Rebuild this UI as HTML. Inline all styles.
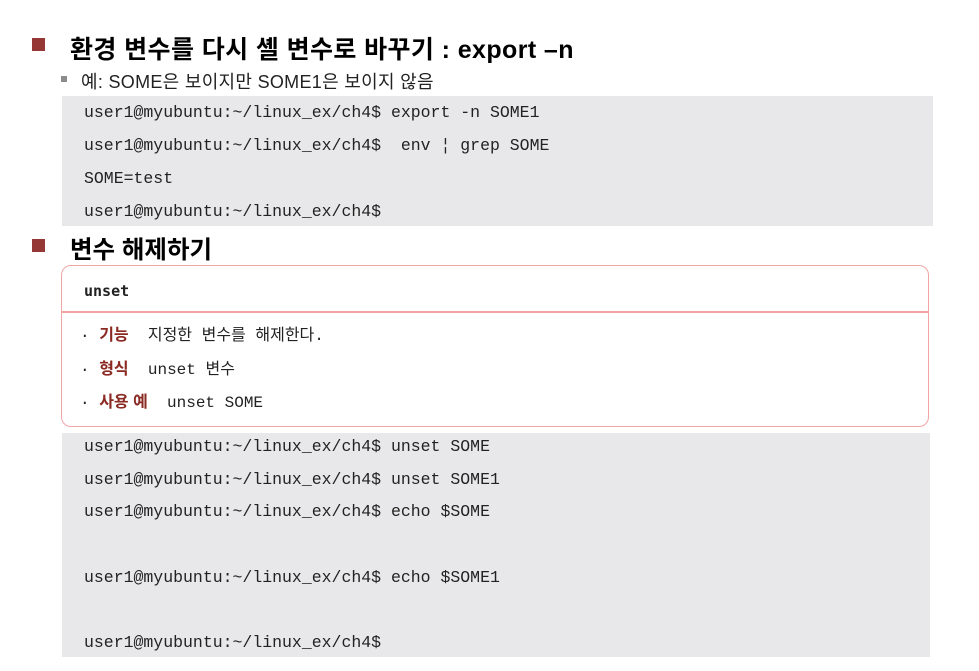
<!DOCTYPE html>
<html><head><meta charset="utf-8"><style>
body{margin:0;width:979px;height:671px;background:#fff;position:relative;overflow:hidden;font-family:"Liberation Sans","Noto Sans CJK KR",sans-serif;}
.a{position:absolute;}
.sq{position:absolute;width:13px;height:13px;background:#953735;}
.h{position:absolute;font-weight:bold;font-size:25px;color:#000;left:70px;white-space:nowrap;}
.code{position:absolute;background:#e8e8ea;}
.m{position:absolute;left:22px;font-family:"Liberation Mono","Noto Sans CJK KR",monospace;font-size:16.5px;color:#222;white-space:pre;line-height:20px;}
.box{position:absolute;left:61px;top:265px;width:866px;height:160px;border:1.5px solid #f2a6a4;border-radius:10px;}
.bl{position:absolute;left:18px;font-family:"Liberation Mono","Noto Sans CJK KR",monospace;font-size:16px;color:#222;white-space:pre;line-height:20px;}
.r{color:#8b2a22;font-weight:bold;font-family:"Liberation Sans","Noto Sans CJK KR",sans-serif;}
</style></head><body>
<div class="sq" style="left:32px;top:38px"></div>
<div class="h" style="top:30px;letter-spacing:0.4px">환경 변수를 다시 셸 변수로 바꾸기 : export –n</div>
<div class="a" style="left:61px;top:76px;width:6px;height:6px;background:#8c8c8c"></div>
<div class="a" style="left:81px;top:68px;font-size:18px;color:#222;white-space:nowrap;letter-spacing:0.3px">예: SOME은 보이지만 SOME1은 보이지 않음</div>
<div class="code" style="left:62px;top:96px;width:871px;height:130px">
<div class="m" style="top:7px">user1@myubuntu:~/linux_ex/ch4$ export -n SOME1</div>
<div class="m" style="top:40px">user1@myubuntu:~/linux_ex/ch4$  env ¦ grep SOME</div>
<div class="m" style="top:73px">SOME=test</div>
<div class="m" style="top:106px">user1@myubuntu:~/linux_ex/ch4$</div>
</div>
<div class="sq" style="left:32px;top:239px"></div>
<div class="h" style="top:231px;font-size:24.5px">변수 해제하기</div>
<div class="box">
<div class="bl" style="left:22px;top:15px;font-weight:bold;font-family:'DejaVu Sans Mono',monospace;font-size:15px">unset</div>
<div class="a" style="left:0;right:0;top:45px;height:1.5px;background:#f2a6a4"></div>
<div class="bl" style="top:60px">· <span class="r">기능</span>  지정한 변수를 해제한다.</div>
<div class="bl" style="top:94px">· <span class="r">형식</span>  unset 변수</div>
<div class="bl" style="top:127px">· <span class="r">사용 예</span>  unset SOME</div>
</div>
<div class="code" style="left:62px;top:433px;width:868px;height:224px">
<div class="m" style="top:4px">user1@myubuntu:~/linux_ex/ch4$ unset SOME</div>
<div class="m" style="top:37px">user1@myubuntu:~/linux_ex/ch4$ unset SOME1</div>
<div class="m" style="top:69px">user1@myubuntu:~/linux_ex/ch4$ echo $SOME</div>
<div class="m" style="top:135px">user1@myubuntu:~/linux_ex/ch4$ echo $SOME1</div>
<div class="m" style="top:200px">user1@myubuntu:~/linux_ex/ch4$</div>
</div>
</body></html>
